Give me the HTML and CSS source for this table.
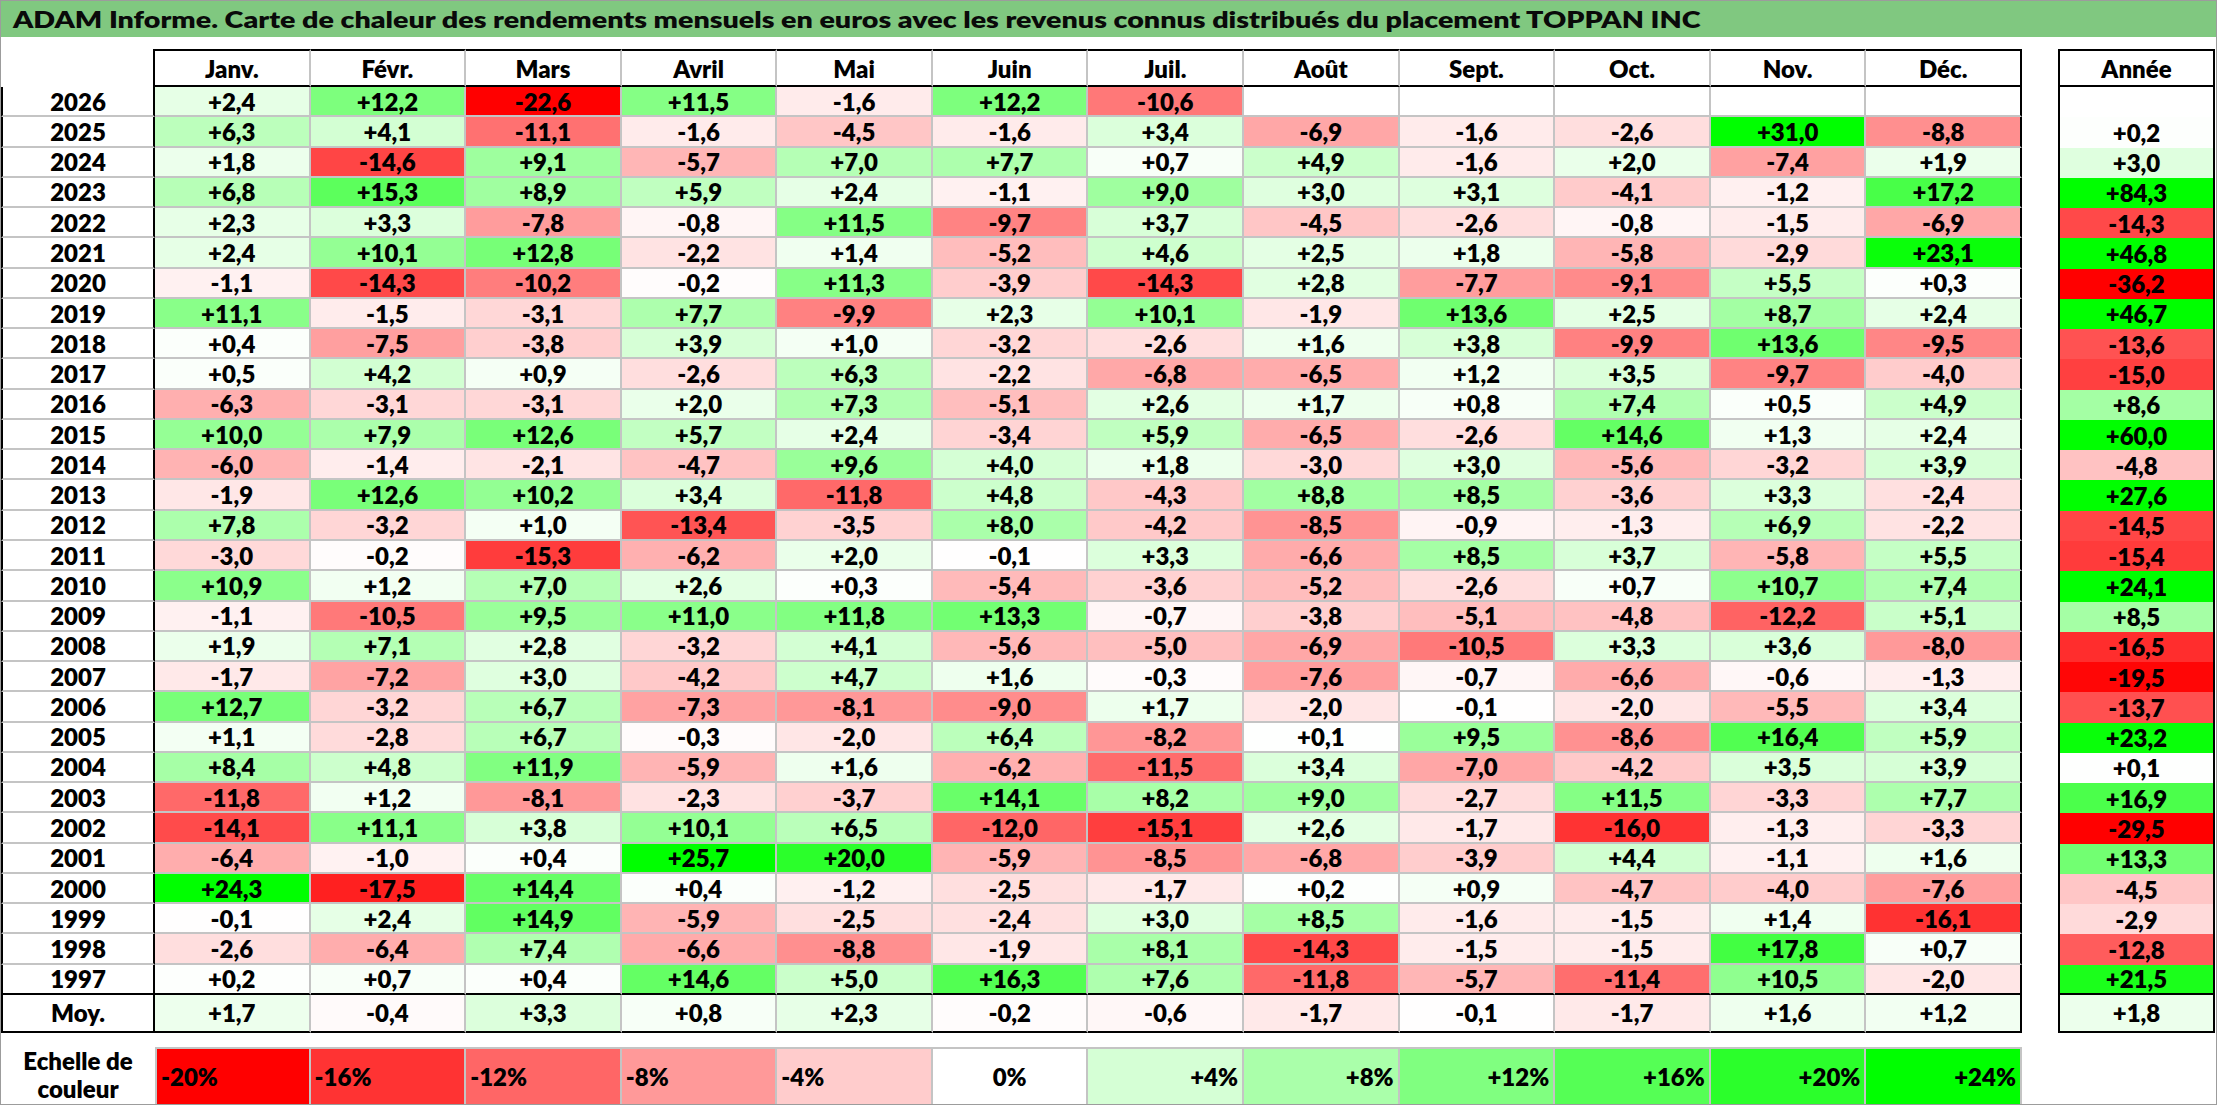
FILE: index.html
```html
<!DOCTYPE html>
<html lang="fr">
<head>
<meta charset="utf-8">
<title>ADAM Informe - TOPPAN INC</title>
<link rel="stylesheet" href="styles.css">
</head>
<body>
<div class="page">
  <div class="title"><span class="title-text">ADAM Informe. Carte de chaleur des rendements mensuels en euros avec les revenus connus distribués du placement TOPPAN INC</span></div>
  <div class="body">
    <div class="main">
      <div class="grid">
        <div class="corner"></div>
        <div class="h">Janv.</div><div class="h">Févr.</div><div class="h">Mars</div><div class="h">Avril</div><div class="h">Mai</div><div class="h">Juin</div><div class="h">Juil.</div><div class="h">Août</div><div class="h">Sept.</div><div class="h">Oct.</div><div class="h">Nov.</div><div class="h e">Déc.</div>

        <div class="y">2026</div><div class="c" style="--v:2.4">+2,4</div><div class="c" style="--v:12.2">+12,2</div><div class="c" style="--v:-22.6">-22,6</div><div class="c" style="--v:11.5">+11,5</div><div class="c" style="--v:-1.6">-1,6</div><div class="c" style="--v:12.2">+12,2</div><div class="c" style="--v:-10.6">-10,6</div><div class="c"></div><div class="c"></div><div class="c"></div><div class="c"></div><div class="c e"></div>
        <div class="y">2025</div><div class="c" style="--v:6.3">+6,3</div><div class="c" style="--v:4.1">+4,1</div><div class="c" style="--v:-11.1">-11,1</div><div class="c" style="--v:-1.6">-1,6</div><div class="c" style="--v:-4.5">-4,5</div><div class="c" style="--v:-1.6">-1,6</div><div class="c" style="--v:3.4">+3,4</div><div class="c" style="--v:-6.9">-6,9</div><div class="c" style="--v:-1.6">-1,6</div><div class="c" style="--v:-2.6">-2,6</div><div class="c" style="--v:31.0">+31,0</div><div class="c e" style="--v:-8.8">-8,8</div>
        <div class="y">2024</div><div class="c" style="--v:1.8">+1,8</div><div class="c" style="--v:-14.6">-14,6</div><div class="c" style="--v:9.1">+9,1</div><div class="c" style="--v:-5.7">-5,7</div><div class="c" style="--v:7.0">+7,0</div><div class="c" style="--v:7.7">+7,7</div><div class="c" style="--v:0.7">+0,7</div><div class="c" style="--v:4.9">+4,9</div><div class="c" style="--v:-1.6">-1,6</div><div class="c" style="--v:2.0">+2,0</div><div class="c" style="--v:-7.4">-7,4</div><div class="c e" style="--v:1.9">+1,9</div>
        <div class="y">2023</div><div class="c" style="--v:6.8">+6,8</div><div class="c" style="--v:15.3">+15,3</div><div class="c" style="--v:8.9">+8,9</div><div class="c" style="--v:5.9">+5,9</div><div class="c" style="--v:2.4">+2,4</div><div class="c" style="--v:-1.1">-1,1</div><div class="c" style="--v:9.0">+9,0</div><div class="c" style="--v:3.0">+3,0</div><div class="c" style="--v:3.1">+3,1</div><div class="c" style="--v:-4.1">-4,1</div><div class="c" style="--v:-1.2">-1,2</div><div class="c e" style="--v:17.2">+17,2</div>
        <div class="y">2022</div><div class="c" style="--v:2.3">+2,3</div><div class="c" style="--v:3.3">+3,3</div><div class="c" style="--v:-7.8">-7,8</div><div class="c" style="--v:-0.8">-0,8</div><div class="c" style="--v:11.5">+11,5</div><div class="c" style="--v:-9.7">-9,7</div><div class="c" style="--v:3.7">+3,7</div><div class="c" style="--v:-4.5">-4,5</div><div class="c" style="--v:-2.6">-2,6</div><div class="c" style="--v:-0.8">-0,8</div><div class="c" style="--v:-1.5">-1,5</div><div class="c e" style="--v:-6.9">-6,9</div>
        <div class="y">2021</div><div class="c" style="--v:2.4">+2,4</div><div class="c" style="--v:10.1">+10,1</div><div class="c" style="--v:12.8">+12,8</div><div class="c" style="--v:-2.2">-2,2</div><div class="c" style="--v:1.4">+1,4</div><div class="c" style="--v:-5.2">-5,2</div><div class="c" style="--v:4.6">+4,6</div><div class="c" style="--v:2.5">+2,5</div><div class="c" style="--v:1.8">+1,8</div><div class="c" style="--v:-5.8">-5,8</div><div class="c" style="--v:-2.9">-2,9</div><div class="c e" style="--v:23.1">+23,1</div>
        <div class="y">2020</div><div class="c" style="--v:-1.1">-1,1</div><div class="c" style="--v:-14.3">-14,3</div><div class="c" style="--v:-10.2">-10,2</div><div class="c" style="--v:-0.2">-0,2</div><div class="c" style="--v:11.3">+11,3</div><div class="c" style="--v:-3.9">-3,9</div><div class="c" style="--v:-14.3">-14,3</div><div class="c" style="--v:2.8">+2,8</div><div class="c" style="--v:-7.7">-7,7</div><div class="c" style="--v:-9.1">-9,1</div><div class="c" style="--v:5.5">+5,5</div><div class="c e" style="--v:0.3">+0,3</div>
        <div class="y">2019</div><div class="c" style="--v:11.1">+11,1</div><div class="c" style="--v:-1.5">-1,5</div><div class="c" style="--v:-3.1">-3,1</div><div class="c" style="--v:7.7">+7,7</div><div class="c" style="--v:-9.9">-9,9</div><div class="c" style="--v:2.3">+2,3</div><div class="c" style="--v:10.1">+10,1</div><div class="c" style="--v:-1.9">-1,9</div><div class="c" style="--v:13.6">+13,6</div><div class="c" style="--v:2.5">+2,5</div><div class="c" style="--v:8.7">+8,7</div><div class="c e" style="--v:2.4">+2,4</div>
        <div class="y">2018</div><div class="c" style="--v:0.4">+0,4</div><div class="c" style="--v:-7.5">-7,5</div><div class="c" style="--v:-3.8">-3,8</div><div class="c" style="--v:3.9">+3,9</div><div class="c" style="--v:1.0">+1,0</div><div class="c" style="--v:-3.2">-3,2</div><div class="c" style="--v:-2.6">-2,6</div><div class="c" style="--v:1.6">+1,6</div><div class="c" style="--v:3.8">+3,8</div><div class="c" style="--v:-9.9">-9,9</div><div class="c" style="--v:13.6">+13,6</div><div class="c e" style="--v:-9.5">-9,5</div>
        <div class="y">2017</div><div class="c" style="--v:0.5">+0,5</div><div class="c" style="--v:4.2">+4,2</div><div class="c" style="--v:0.9">+0,9</div><div class="c" style="--v:-2.6">-2,6</div><div class="c" style="--v:6.3">+6,3</div><div class="c" style="--v:-2.2">-2,2</div><div class="c" style="--v:-6.8">-6,8</div><div class="c" style="--v:-6.5">-6,5</div><div class="c" style="--v:1.2">+1,2</div><div class="c" style="--v:3.5">+3,5</div><div class="c" style="--v:-9.7">-9,7</div><div class="c e" style="--v:-4.0">-4,0</div>
        <div class="y">2016</div><div class="c" style="--v:-6.3">-6,3</div><div class="c" style="--v:-3.1">-3,1</div><div class="c" style="--v:-3.1">-3,1</div><div class="c" style="--v:2.0">+2,0</div><div class="c" style="--v:7.3">+7,3</div><div class="c" style="--v:-5.1">-5,1</div><div class="c" style="--v:2.6">+2,6</div><div class="c" style="--v:1.7">+1,7</div><div class="c" style="--v:0.8">+0,8</div><div class="c" style="--v:7.4">+7,4</div><div class="c" style="--v:0.5">+0,5</div><div class="c e" style="--v:4.9">+4,9</div>
        <div class="y">2015</div><div class="c" style="--v:10.0">+10,0</div><div class="c" style="--v:7.9">+7,9</div><div class="c" style="--v:12.6">+12,6</div><div class="c" style="--v:5.7">+5,7</div><div class="c" style="--v:2.4">+2,4</div><div class="c" style="--v:-3.4">-3,4</div><div class="c" style="--v:5.9">+5,9</div><div class="c" style="--v:-6.5">-6,5</div><div class="c" style="--v:-2.6">-2,6</div><div class="c" style="--v:14.6">+14,6</div><div class="c" style="--v:1.3">+1,3</div><div class="c e" style="--v:2.4">+2,4</div>
        <div class="y">2014</div><div class="c" style="--v:-6.0">-6,0</div><div class="c" style="--v:-1.4">-1,4</div><div class="c" style="--v:-2.1">-2,1</div><div class="c" style="--v:-4.7">-4,7</div><div class="c" style="--v:9.6">+9,6</div><div class="c" style="--v:4.0">+4,0</div><div class="c" style="--v:1.8">+1,8</div><div class="c" style="--v:-3.0">-3,0</div><div class="c" style="--v:3.0">+3,0</div><div class="c" style="--v:-5.6">-5,6</div><div class="c" style="--v:-3.2">-3,2</div><div class="c e" style="--v:3.9">+3,9</div>
        <div class="y">2013</div><div class="c" style="--v:-1.9">-1,9</div><div class="c" style="--v:12.6">+12,6</div><div class="c" style="--v:10.2">+10,2</div><div class="c" style="--v:3.4">+3,4</div><div class="c" style="--v:-11.8">-11,8</div><div class="c" style="--v:4.8">+4,8</div><div class="c" style="--v:-4.3">-4,3</div><div class="c" style="--v:8.8">+8,8</div><div class="c" style="--v:8.5">+8,5</div><div class="c" style="--v:-3.6">-3,6</div><div class="c" style="--v:3.3">+3,3</div><div class="c e" style="--v:-2.4">-2,4</div>
        <div class="y">2012</div><div class="c" style="--v:7.8">+7,8</div><div class="c" style="--v:-3.2">-3,2</div><div class="c" style="--v:1.0">+1,0</div><div class="c" style="--v:-13.4">-13,4</div><div class="c" style="--v:-3.5">-3,5</div><div class="c" style="--v:8.0">+8,0</div><div class="c" style="--v:-4.2">-4,2</div><div class="c" style="--v:-8.5">-8,5</div><div class="c" style="--v:-0.9">-0,9</div><div class="c" style="--v:-1.3">-1,3</div><div class="c" style="--v:6.9">+6,9</div><div class="c e" style="--v:-2.2">-2,2</div>
        <div class="y">2011</div><div class="c" style="--v:-3.0">-3,0</div><div class="c" style="--v:-0.2">-0,2</div><div class="c" style="--v:-15.3">-15,3</div><div class="c" style="--v:-6.2">-6,2</div><div class="c" style="--v:2.0">+2,0</div><div class="c" style="--v:-0.1">-0,1</div><div class="c" style="--v:3.3">+3,3</div><div class="c" style="--v:-6.6">-6,6</div><div class="c" style="--v:8.5">+8,5</div><div class="c" style="--v:3.7">+3,7</div><div class="c" style="--v:-5.8">-5,8</div><div class="c e" style="--v:5.5">+5,5</div>
        <div class="y">2010</div><div class="c" style="--v:10.9">+10,9</div><div class="c" style="--v:1.2">+1,2</div><div class="c" style="--v:7.0">+7,0</div><div class="c" style="--v:2.6">+2,6</div><div class="c" style="--v:0.3">+0,3</div><div class="c" style="--v:-5.4">-5,4</div><div class="c" style="--v:-3.6">-3,6</div><div class="c" style="--v:-5.2">-5,2</div><div class="c" style="--v:-2.6">-2,6</div><div class="c" style="--v:0.7">+0,7</div><div class="c" style="--v:10.7">+10,7</div><div class="c e" style="--v:7.4">+7,4</div>
        <div class="y">2009</div><div class="c" style="--v:-1.1">-1,1</div><div class="c" style="--v:-10.5">-10,5</div><div class="c" style="--v:9.5">+9,5</div><div class="c" style="--v:11.0">+11,0</div><div class="c" style="--v:11.8">+11,8</div><div class="c" style="--v:13.3">+13,3</div><div class="c" style="--v:-0.7">-0,7</div><div class="c" style="--v:-3.8">-3,8</div><div class="c" style="--v:-5.1">-5,1</div><div class="c" style="--v:-4.8">-4,8</div><div class="c" style="--v:-12.2">-12,2</div><div class="c e" style="--v:5.1">+5,1</div>
        <div class="y">2008</div><div class="c" style="--v:1.9">+1,9</div><div class="c" style="--v:7.1">+7,1</div><div class="c" style="--v:2.8">+2,8</div><div class="c" style="--v:-3.2">-3,2</div><div class="c" style="--v:4.1">+4,1</div><div class="c" style="--v:-5.6">-5,6</div><div class="c" style="--v:-5.0">-5,0</div><div class="c" style="--v:-6.9">-6,9</div><div class="c" style="--v:-10.5">-10,5</div><div class="c" style="--v:3.3">+3,3</div><div class="c" style="--v:3.6">+3,6</div><div class="c e" style="--v:-8.0">-8,0</div>
        <div class="y">2007</div><div class="c" style="--v:-1.7">-1,7</div><div class="c" style="--v:-7.2">-7,2</div><div class="c" style="--v:3.0">+3,0</div><div class="c" style="--v:-4.2">-4,2</div><div class="c" style="--v:4.7">+4,7</div><div class="c" style="--v:1.6">+1,6</div><div class="c" style="--v:-0.3">-0,3</div><div class="c" style="--v:-7.6">-7,6</div><div class="c" style="--v:-0.7">-0,7</div><div class="c" style="--v:-6.6">-6,6</div><div class="c" style="--v:-0.6">-0,6</div><div class="c e" style="--v:-1.3">-1,3</div>
        <div class="y">2006</div><div class="c" style="--v:12.7">+12,7</div><div class="c" style="--v:-3.2">-3,2</div><div class="c" style="--v:6.7">+6,7</div><div class="c" style="--v:-7.3">-7,3</div><div class="c" style="--v:-8.1">-8,1</div><div class="c" style="--v:-9.0">-9,0</div><div class="c" style="--v:1.7">+1,7</div><div class="c" style="--v:-2.0">-2,0</div><div class="c" style="--v:-0.1">-0,1</div><div class="c" style="--v:-2.0">-2,0</div><div class="c" style="--v:-5.5">-5,5</div><div class="c e" style="--v:3.4">+3,4</div>
        <div class="y">2005</div><div class="c" style="--v:1.1">+1,1</div><div class="c" style="--v:-2.8">-2,8</div><div class="c" style="--v:6.7">+6,7</div><div class="c" style="--v:-0.3">-0,3</div><div class="c" style="--v:-2.0">-2,0</div><div class="c" style="--v:6.4">+6,4</div><div class="c" style="--v:-8.2">-8,2</div><div class="c" style="--v:0.1">+0,1</div><div class="c" style="--v:9.5">+9,5</div><div class="c" style="--v:-8.6">-8,6</div><div class="c" style="--v:16.4">+16,4</div><div class="c e" style="--v:5.9">+5,9</div>
        <div class="y">2004</div><div class="c" style="--v:8.4">+8,4</div><div class="c" style="--v:4.8">+4,8</div><div class="c" style="--v:11.9">+11,9</div><div class="c" style="--v:-5.9">-5,9</div><div class="c" style="--v:1.6">+1,6</div><div class="c" style="--v:-6.2">-6,2</div><div class="c" style="--v:-11.5">-11,5</div><div class="c" style="--v:3.4">+3,4</div><div class="c" style="--v:-7.0">-7,0</div><div class="c" style="--v:-4.2">-4,2</div><div class="c" style="--v:3.5">+3,5</div><div class="c e" style="--v:3.9">+3,9</div>
        <div class="y">2003</div><div class="c" style="--v:-11.8">-11,8</div><div class="c" style="--v:1.2">+1,2</div><div class="c" style="--v:-8.1">-8,1</div><div class="c" style="--v:-2.3">-2,3</div><div class="c" style="--v:-3.7">-3,7</div><div class="c" style="--v:14.1">+14,1</div><div class="c" style="--v:8.2">+8,2</div><div class="c" style="--v:9.0">+9,0</div><div class="c" style="--v:-2.7">-2,7</div><div class="c" style="--v:11.5">+11,5</div><div class="c" style="--v:-3.3">-3,3</div><div class="c e" style="--v:7.7">+7,7</div>
        <div class="y">2002</div><div class="c" style="--v:-14.1">-14,1</div><div class="c" style="--v:11.1">+11,1</div><div class="c" style="--v:3.8">+3,8</div><div class="c" style="--v:10.1">+10,1</div><div class="c" style="--v:6.5">+6,5</div><div class="c" style="--v:-12.0">-12,0</div><div class="c" style="--v:-15.1">-15,1</div><div class="c" style="--v:2.6">+2,6</div><div class="c" style="--v:-1.7">-1,7</div><div class="c" style="--v:-16.0">-16,0</div><div class="c" style="--v:-1.3">-1,3</div><div class="c e" style="--v:-3.3">-3,3</div>
        <div class="y">2001</div><div class="c" style="--v:-6.4">-6,4</div><div class="c" style="--v:-1.0">-1,0</div><div class="c" style="--v:0.4">+0,4</div><div class="c" style="--v:25.7">+25,7</div><div class="c" style="--v:20.0">+20,0</div><div class="c" style="--v:-5.9">-5,9</div><div class="c" style="--v:-8.5">-8,5</div><div class="c" style="--v:-6.8">-6,8</div><div class="c" style="--v:-3.9">-3,9</div><div class="c" style="--v:4.4">+4,4</div><div class="c" style="--v:-1.1">-1,1</div><div class="c e" style="--v:1.6">+1,6</div>
        <div class="y">2000</div><div class="c" style="--v:24.3">+24,3</div><div class="c" style="--v:-17.5">-17,5</div><div class="c" style="--v:14.4">+14,4</div><div class="c" style="--v:0.4">+0,4</div><div class="c" style="--v:-1.2">-1,2</div><div class="c" style="--v:-2.5">-2,5</div><div class="c" style="--v:-1.7">-1,7</div><div class="c" style="--v:0.2">+0,2</div><div class="c" style="--v:0.9">+0,9</div><div class="c" style="--v:-4.7">-4,7</div><div class="c" style="--v:-4.0">-4,0</div><div class="c e" style="--v:-7.6">-7,6</div>
        <div class="y">1999</div><div class="c" style="--v:-0.1">-0,1</div><div class="c" style="--v:2.4">+2,4</div><div class="c" style="--v:14.9">+14,9</div><div class="c" style="--v:-5.9">-5,9</div><div class="c" style="--v:-2.5">-2,5</div><div class="c" style="--v:-2.4">-2,4</div><div class="c" style="--v:3.0">+3,0</div><div class="c" style="--v:8.5">+8,5</div><div class="c" style="--v:-1.6">-1,6</div><div class="c" style="--v:-1.5">-1,5</div><div class="c" style="--v:1.4">+1,4</div><div class="c e" style="--v:-16.1">-16,1</div>
        <div class="y">1998</div><div class="c" style="--v:-2.6">-2,6</div><div class="c" style="--v:-6.4">-6,4</div><div class="c" style="--v:7.4">+7,4</div><div class="c" style="--v:-6.6">-6,6</div><div class="c" style="--v:-8.8">-8,8</div><div class="c" style="--v:-1.9">-1,9</div><div class="c" style="--v:8.1">+8,1</div><div class="c" style="--v:-14.3">-14,3</div><div class="c" style="--v:-1.5">-1,5</div><div class="c" style="--v:-1.5">-1,5</div><div class="c" style="--v:17.8">+17,8</div><div class="c e" style="--v:0.7">+0,7</div>
        <div class="y l">1997</div><div class="c l" style="--v:0.2">+0,2</div><div class="c l" style="--v:0.7">+0,7</div><div class="c l" style="--v:0.4">+0,4</div><div class="c l" style="--v:14.6">+14,6</div><div class="c l" style="--v:5.0">+5,0</div><div class="c l" style="--v:16.3">+16,3</div><div class="c l" style="--v:7.6">+7,6</div><div class="c l" style="--v:-11.8">-11,8</div><div class="c l" style="--v:-5.7">-5,7</div><div class="c l" style="--v:-11.4">-11,4</div><div class="c l" style="--v:10.5">+10,5</div><div class="c e l" style="--v:-2.0">-2,0</div>
        <div class="y l">Moy.</div><div class="c l" style="--v:1.7">+1,7</div><div class="c l" style="--v:-0.4">-0,4</div><div class="c l" style="--v:3.3">+3,3</div><div class="c l" style="--v:0.8">+0,8</div><div class="c l" style="--v:2.3">+2,3</div><div class="c l" style="--v:-0.2">-0,2</div><div class="c l" style="--v:-0.6">-0,6</div><div class="c l" style="--v:-1.7">-1,7</div><div class="c l" style="--v:-0.1">-0,1</div><div class="c l" style="--v:-1.7">-1,7</div><div class="c l" style="--v:1.6">+1,6</div><div class="c e l" style="--v:1.2">+1,2</div>
      </div>

      <div class="legend">
        <div class="leg-label">Echelle de<br>couleur</div>
        <div class="k left" style="--v:-20">-20%</div>
        <div class="k left" style="--v:-16">-16%</div>
        <div class="k left" style="--v:-12">-12%</div>
        <div class="k left" style="--v:-8">-8%</div>
        <div class="k left" style="--v:-4">-4%</div>
        <div class="k mid" style="--v:0">0%</div>
        <div class="k right" style="--v:4">+4%</div>
        <div class="k right" style="--v:8">+8%</div>
        <div class="k right" style="--v:12">+12%</div>
        <div class="k right" style="--v:16">+16%</div>
        <div class="k right" style="--v:20">+20%</div>
        <div class="k right" style="--v:24">+24%</div>
      </div>
    </div>

    <div class="year-col">
      <div class="h yh">Année</div>
      <div class="a"></div>
      <div class="a" style="--v:0.2">+0,2</div>
      <div class="a" style="--v:3.0">+3,0</div>
      <div class="a" style="--v:84.3">+84,3</div>
      <div class="a" style="--v:-14.3">-14,3</div>
      <div class="a" style="--v:46.8">+46,8</div>
      <div class="a" style="--v:-36.2">-36,2</div>
      <div class="a" style="--v:46.7">+46,7</div>
      <div class="a" style="--v:-13.6">-13,6</div>
      <div class="a" style="--v:-15.0">-15,0</div>
      <div class="a" style="--v:8.6">+8,6</div>
      <div class="a" style="--v:60.0">+60,0</div>
      <div class="a" style="--v:-4.8">-4,8</div>
      <div class="a" style="--v:27.6">+27,6</div>
      <div class="a" style="--v:-14.5">-14,5</div>
      <div class="a" style="--v:-15.4">-15,4</div>
      <div class="a" style="--v:24.1">+24,1</div>
      <div class="a" style="--v:8.5">+8,5</div>
      <div class="a" style="--v:-16.5">-16,5</div>
      <div class="a" style="--v:-19.5">-19,5</div>
      <div class="a" style="--v:-13.7">-13,7</div>
      <div class="a" style="--v:23.2">+23,2</div>
      <div class="a" style="--v:0.1">+0,1</div>
      <div class="a" style="--v:16.9">+16,9</div>
      <div class="a" style="--v:-29.5">-29,5</div>
      <div class="a" style="--v:13.3">+13,3</div>
      <div class="a" style="--v:-4.5">-4,5</div>
      <div class="a" style="--v:-2.9">-2,9</div>
      <div class="a" style="--v:-12.8">-12,8</div>
      <div class="a l" style="--v:21.5">+21,5</div>
      <div class="a l avg" style="--v:1.8">+1,8</div>
    </div>
  </div>
</div>
</body>
</html>
```
FILE: styles.css
```css
html, body {
  margin: 0;
  padding: 0;
  background: #ffffff;
}

.page {
  width: 2217px;
  height: 1105px;
  box-sizing: border-box;
  border: 1px solid #9c9c9c;
  font-family: Lato, "Open Sans", sans-serif;
  font-weight: 800;
  color: #000;
  overflow: hidden;
}

.title {
  height: 36px;
  background: #80c880;
  line-height: 37px;
  padding-left: 12px;
  white-space: nowrap;
  color: #0a0a0a;
}

.title-text {
  display: inline-block;
  font-size: 23px;
  transform: scaleX(1.245);
  transform-origin: left center;
}

.body {
  margin-top: 12px;
  display: flex;
  gap: 36px;
  align-items: flex-start;
}

.main {
  width: 2021px;
  display: flex;
  flex-direction: column;
}

.grid {
  display: grid;
  grid-template-columns: 154px repeat(12, 1fr);
  grid-template-rows: 38px repeat(30, 30.27px) 38px;
}

.grid > div,
.year-col > div,
.legend > div {
  box-sizing: border-box;
  display: flex;
  align-items: center;
  justify-content: center;
  font-size: 24px;
  white-space: nowrap;
}

.corner {
  border-right: 2px solid #000;
}

.h {
  border-top: 2px solid #000;
  border-bottom: 2px solid #000;
  border-right: 2px solid #c4c4c4;
}

.h.e {
  border-right: 2px solid #000;
}

.y {
  border-left: 2px solid #000;
  border-right: 2px solid #000;
  border-bottom: 2px solid #c4c4c4;
}

.c {
  border-right: 2px solid #c4c4c4;
  border-bottom: 2px solid #c4c4c4;
}

.c,
.a,
.k {
  background: rgb(
    calc(255 - 255 * clamp(0, var(--v) / 24, 1)),
    calc(255 - 255 * clamp(0, var(--v) / -20, 1)),
    calc(255 - 255 * clamp(0, max(var(--v) / 24, var(--v) / -20), 1))
  );
}

.c.e {
  border-right: 2px solid #000;
}

.grid .l {
  border-bottom: 2px solid #000;
}

.legend {
  margin-top: 14px;
  height: 57px;
  display: grid;
  grid-template-columns: 154px repeat(12, 1fr);
}

.leg-label {
  text-align: center;
  line-height: 28px;
  flex-direction: column;
}

.k {
  border-top: 2px solid #c4c4c4;
  border-right: 2px solid #c4c4c4;
}

.legend .k:nth-child(2) {
  border-left: 2px solid #c4c4c4;
}

.k.left {
  justify-content: flex-start;
  padding-left: 4px;
}

.k.right {
  justify-content: flex-end;
  padding-right: 4px;
}

.year-col {
  width: 157px;
  display: grid;
  grid-template-rows: 38px repeat(30, 30.27px) 38px;
}

.yh {
  border: 2px solid #000;
}

.a {
  border-left: 2px solid #000;
  border-right: 2px solid #000;
}

.year-col .l {
  border-bottom: 2px solid #000;
}
```
